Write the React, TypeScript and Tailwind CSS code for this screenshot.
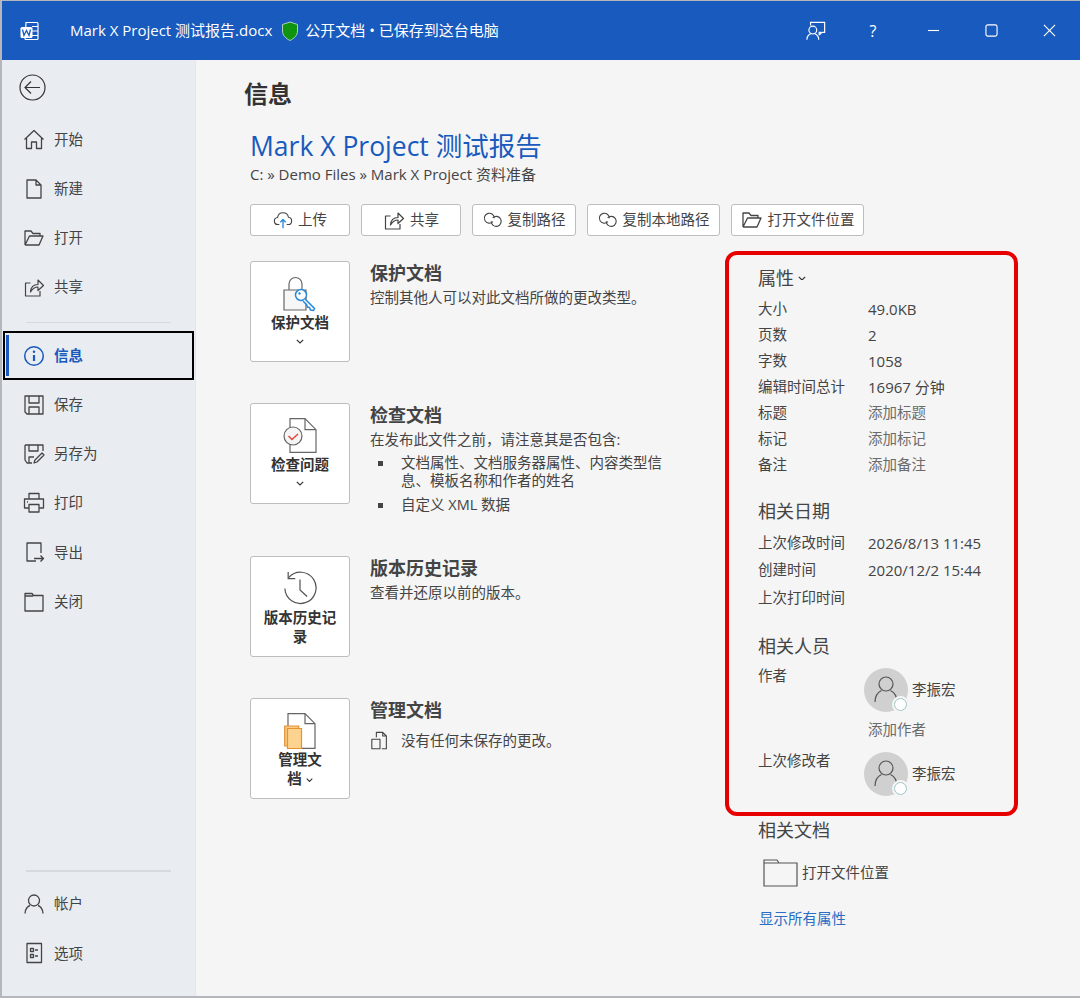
import { ReactNode } from "react"

const FONT = 'font-["Open_Sans","Noto_Sans_CJK_SC",sans-serif]'

function Ico({ size = 22, sw = 1.3, color = "#444", children }: { size?: number; sw?: number; color?: string; children: ReactNode }) {
  return (
    <svg width={size} height={size} viewBox="0 0 22 22" fill="none" stroke={color} strokeWidth={sw} strokeLinejoin="round" className="shrink-0">
      {children}
    </svg>
  )
}

const HomeIcon = () => <Ico><path d="M1.5 10.5 11 1.5l9.500 9M3.500 9v10.500h5V13h5v6.500h5V9" /></Ico>
const NewIcon = () => <Ico><path d="M4 2h9l5 5v13H4zM13 2v5h5" /></Ico>
const OpenIcon = () => <Ico><path d="M2 18V4h6l2 2.500h7V9M2 18h14l4-9H6.500L2 18" /></Ico>
const ShareIcon = () => <Ico sw={1.2}><path d="M7.500 7H2.500v13H17v-5M7.500 16c.3-4.500 3-7.500 7.500-7.500V4l5.500 5.500L15 14.500V11c-3 0-5.500 1.500-7.500 5z" /></Ico>
const InfoIcon = () => (
  <Ico color="#185abd" sw={1.5}>
    <circle cx="11" cy="11" r="9.300" />
    <path d="M11 10v6" strokeWidth={2.200} />
    <circle cx="11" cy="6.800" r="1.200" fill="#185abd" stroke="none" />
  </Ico>
)
const SaveIcon = () => <Ico><path d="M2 2h18v18H4l-2-2zM6 2v7h10V2M6 20v-7h10v7" /></Ico>
const SaveAsIcon = () => <Ico><path d="M2 2h18v6M2 2v15l2 3h5M6 2v6h9V2M6 20v-6h5M11 20l1-3 7-7 2 2-7 7z" /></Ico>
const PrintIcon = () => <Ico><path d="M6 7V1.500h10V7M6 16H1.500V7h19v9H16M6 12.500h10v7.500H6zM4 10h1" /></Ico>
const ExportIcon = () => <Ico><path d="M18 12V2H4v18h9M11 17.500h9.500M17.500 14.500l3 3-3 3" /></Ico>
const CloseIcon = () => <Ico><path d="M2 20V2.500h7l1.500 2H20V20zM2 5h8" /></Ico>
const UserIcon = () => <Ico><circle cx="11" cy="7.500" r="5.500" /><path d="M2 20.500c0-4.500 3-7.500 5-8M20 20.500c0-4.500-3-7.500-5-8" /></Ico>
const OptionsIcon = () => <Ico><path d="M4 1.500h14.500v19H4zM7.500 6.500h3v3h-3zM7.500 12.500h3v3h-3zM12 8h3M12 14h3" /></Ico>

const UploadIcon = () => (
  <Ico size={20} sw={1.2}>
    <path d="M7 16H5.500C3 16 1.500 14 1.500 12c0-2 1.500-3.500 3.500-3.700C5.500 5 8 3 11 3c3 0 5.500 2.300 6 5 2 .3 3.500 2 3.500 4s-1.500 4-4 4H15" />
    <path d="M11 20v-9M8 13.500l3-3 3 3" stroke="#2b88d8" strokeWidth={1.500} />
  </Ico>
)
const LinkIcon = () => (
  <Ico size={20} sw={1.2}>
    <path d="M10.900 12.900A5.500 5.500 0 1 1 12.500 9" />
    <path d="M10.600 8.600A5.500 5.500 0 1 1 9 12.500" />
  </Ico>
)

const LockIcon = () => (
  <svg width="34" height="37" viewBox="0 0 34 37" fill="none">
    <path d="M6 14V8a6.500 6.500 0 0 1 13 0v6" stroke="#666" strokeWidth="1.200" />
    <path d="M1 14h22v20H1z" fill="#f7f7f7" stroke="#666" strokeWidth="1.200" />
    <circle cx="18" cy="19" r="5.500" fill="#fff" stroke="#2b88d8" strokeWidth="1.500" />
    <path d="M22 23l9.500 9.500-1 2-3-.5-1-2.500-2-.5-1-2.500-3.500-3.500" fill="#fff" stroke="#2b88d8" strokeWidth="1.500" />
    <circle cx="16.500" cy="17.500" r="1.200" fill="#2b88d8" />
  </svg>
)
const InspectIcon = () => (
  <svg width="34" height="35" viewBox="0 0 34 35" fill="none">
    <path d="M7 .7h15l11 11v22.600H7z" fill="#fff" stroke="#666" strokeWidth="1.200" />
    <path d="M22 .7v11h11" stroke="#666" strokeWidth="1.200" />
    <circle cx="10" cy="18" r="9" fill="#f5f5f5" stroke="#666" strokeWidth="1.200" />
    <path d="M5.500 18l3.500 3.500 6-5.500" stroke="#e2483f" strokeWidth="1.500" />
  </svg>
)
const HistoryIcon = () => (
  <svg width="36" height="35" viewBox="0 0 38 37" fill="none" stroke="#555" strokeWidth="1.300">
    <path d="M7 7A16.500 16.500 0 1 1 3 18.500" />
    <path d="M6.500 1v7h7.500" />
    <path d="M19 9v11l7.500 7" />
  </svg>
)
const ManageIcon = () => (
  <svg width="32" height="36" viewBox="0 0 32 36" fill="none">
    <path d="M4 .7h17l10 10v24.600H4z" fill="#fff" stroke="#666" strokeWidth="1.200" />
    <path d="M21 .7v10h10" stroke="#666" strokeWidth="1.200" />
    <path d="M.7 13h14v20H.7z" fill="#f8c98a" stroke="#e8912d" strokeWidth="1.200" />
    <path d="M3.500 15.500h14v20h-14z" fill="#fcd48f" stroke="#e8912d" strokeWidth="1.200" />
  </svg>
)
const SmallDocs = () => (
  <Ico size={20} sw={1.200}>
    <path d="M7 7V1.500h7l4 4v14h-5M14 1.500v4h4" />
    <path d="M2 9h9v10.500H2z" />
  </Ico>
)

const Chevron = ({ size = 8 }: { size?: number }) => (
  <svg width={size} height={size * 0.6} viewBox="0 0 10 6" fill="none" stroke="#333" strokeWidth="1.500" className="inline-block">
    <path d="M1 1l4 4 4-4" />
  </svg>
)

function NavItem({ icon, label, active }: { icon: ReactNode; label: string; active?: boolean }) {
  if (active) {
    return (
      <div className="h-[49px] mx-[1px] flex items-center border-2 border-black pl-[1px]">
        <div className="w-[3px] h-[41px] bg-[#185abd]" />
        <div className="ml-[14px] flex items-center gap-[9px]">
          {icon}
          <span className="text-[14.500px] font-semibold text-[#185abd]">{label}</span>
        </div>
      </div>
    )
  }
  return (
    <div className="h-[49.200px] pl-[21px] flex items-center gap-[9px] text-[14.500px] text-[#444]">
      {icon}
      <span>{label}</span>
    </div>
  )
}

function ActionBtn({ icon, label, w }: { icon: ReactNode; label: string; w: string }) {
  return (
    <div className={`h-[32px] ${w} bg-white border border-[#bdbdbd] rounded-[3px] flex items-center justify-center gap-[5px] text-[14.500px] text-[#444]`}>
      {icon}
      <span>{label}</span>
    </div>
  )
}

function Section({ icon, label, chevron, title, h, children }: { icon: ReactNode; label: ReactNode; chevron?: boolean; title: string; h: string; children: ReactNode }) {
  return (
    <div className={`flex ${h} items-start`}>
      <div className="w-[100px] h-[101px] shrink-0 bg-white border border-[#bdbdbd] rounded-[3px] flex flex-col items-center pt-[14px]">
        <div className="h-[37px] flex items-start justify-center">{icon}</div>
        <div className="text-[14.500px] leading-[18.500px] font-bold text-[#333] text-center mt-[1px] px-[10px]">{label}</div>
        {chevron && <div className="mt-[2px] leading-[10px]"><Chevron /></div>}
      </div>
      <div className="ml-[20px] w-[310px]">
        <div className="text-[18px] leading-[24px] font-bold text-[#444]">{title}</div>
        {children}
      </div>
    </div>
  )
}

function PropRow({ k, v, muted, h = "h-[26px]" }: { k: string; v?: string; muted?: boolean; h?: string }) {
  return (
    <div className={`flex items-center ${h} text-[14.500px] text-[#444]`}>
      <span className="w-[110px] shrink-0">{k}</span>
      <span className={muted ? "text-[#6b6b6b]" : "text-[15px]"}>{v}</span>
    </div>
  )
}

function Person() {
  return (
    <div className="flex items-center">
      <div className="relative w-[44px] h-[44px] rounded-full bg-[#d0d0d0] flex items-center justify-center">
        <svg width="24" height="27" viewBox="0 0 24 27" fill="none" stroke="#555" strokeWidth="1.200">
          <circle cx="12" cy="8" r="7" />
          <path d="M1 26c0-6 3.500-10 6.500-11.500M23 26c0-6-3.500-10-6.500-11.500" />
        </svg>
        <div className="absolute right-[-1px] bottom-[-1px] w-[17px] h-[17px] rounded-full bg-white border-2 border-[#f5f5f5] outline outline-1 outline-[#9cc3c4] outline-offset-[-3px]" />
      </div>
      <span className="ml-[4px] text-[14.500px] text-[#444]">李振宏</span>
    </div>
  )
}

function Bullet({ children, className }: { children: ReactNode; className?: string }) {
  return (
    <li className={`flex ${className ?? ""}`}>
      <span className="w-[31px] shrink-0 pl-[8px] pt-[7px]"><span className="block w-[5px] h-[5px] bg-[#444]" /></span>
      <span className="w-[265px]">{children}</span>
    </li>
  )
}

export default function App() {
  return (
    <div className={`w-[1080px] h-[998px] flex flex-col overflow-hidden border-t border-l-2 border-b-2 border-[#b4b7bb] ${FONT}`}>
      <header className="h-[59px] shrink-0 bg-[#185abd] text-white flex items-center">
        <svg width="20" height="20" viewBox="0 0 20 20" fill="none" className="ml-[18px]">
          <path d="M6 1.500h11a1 1 0 0 1 1 1v15a1 1 0 0 1-1 1H6a1 1 0 0 1-1-1z" stroke="#fff" strokeWidth="1.200" />
          <path d="M12 5.500h6M12 10h6M12 14.500h6" stroke="#fff" strokeWidth="1.200" />
          <rect x="0.500" y="6" width="12" height="11" rx="1.500" fill="#fff" />
          <path d="M2.500 8.500l1.500 6 2.500-5 2.500 5 1.500-6" stroke="#185abd" strokeWidth="1.300" />
        </svg>
        <span className="ml-[30px] text-[15px]">Mark X Project 测试报告.docx</span>
        <svg width="18" height="20" viewBox="0 0 18 20" className="ml-[9px]">
          <path d="M9 1l7.500 2.500V10c0 4.500-3.500 7.500-7.500 9.500C5 17.500 1.500 14.500 1.500 10V3.500z" fill="#109410" stroke="#cfe6cf" strokeWidth="0.800" />
        </svg>
        <span className="ml-[6px] text-[15px]">公开文档 • 已保存到这台电脑</span>
        <div className="ml-auto flex items-center pr-[24px]">
          <svg width="20" height="20" viewBox="0 0 22 22" fill="none" stroke="#fff" strokeWidth="1.300">
            <path d="M5 5V1.500h15.500v11h-3l-3 3M14.500 15.500v-3h2" />
            <circle cx="7.500" cy="10" r="4.300" />
            <path d="M1 20.500c0-3.500 2-5.500 4-6.500M14 20.500c0-3.500-2-5.500-4-6.500" />
          </svg>
          <span className="ml-[40px] text-[16px] w-[14px] text-center">?</span>
          <svg width="13" height="13" viewBox="0 0 14 14" className="ml-[47px]" fill="none" stroke="#fff" strokeWidth="1.200"><path d="M1 7h12" /></svg>
          <svg width="13" height="13" viewBox="0 0 14 14" className="ml-[45px]" fill="none" stroke="#fff" strokeWidth="1.200"><rect x="1" y="1" width="12" height="12" rx="2" /></svg>
          <svg width="13" height="13" viewBox="0 0 14 14" className="ml-[45px]" fill="none" stroke="#fff" strokeWidth="1.200"><path d="M1 1l12 12M13 1L1 13" /></svg>
        </div>
      </header>

      <div className="flex flex-1 min-h-0">
        <aside className="w-[194px] shrink-0 bg-[#e9edf2] flex flex-col border-r border-[#e4e6e9]">
          <div className="h-[55px] pl-[17px] pt-[14px] shrink-0">
            <svg width="27" height="27" viewBox="0 0 27 27" fill="none" stroke="#333" strokeWidth="1.200">
              <circle cx="13.500" cy="13.500" r="12.500" />
              <path d="M21 13.500H6M12 7.500l-6 6 6 6" />
            </svg>
          </div>
          <NavItem icon={<HomeIcon />} label="开始" />
          <NavItem icon={<NewIcon />} label="新建" />
          <NavItem icon={<OpenIcon />} label="打开" />
          <NavItem icon={<ShareIcon />} label="共享" />
          <div className="h-[1.500px] mx-[24px] mt-[10px] mb-[8px] bg-[#d6d9dd]" />
          <NavItem icon={<InfoIcon />} label="信息" active />
          <NavItem icon={<SaveIcon />} label="保存" />
          <NavItem icon={<SaveAsIcon />} label="另存为" />
          <NavItem icon={<PrintIcon />} label="打印" />
          <NavItem icon={<ExportIcon />} label="导出" />
          <NavItem icon={<CloseIcon />} label="关闭" />
          <div className="mt-auto h-[1.500px] mx-[24px] mb-[8px] bg-[#d6d9dd]" />
          <NavItem icon={<UserIcon />} label="帐户" />
          <NavItem icon={<OptionsIcon />} label="选项" />
          <div className="h-[18px] shrink-0" />
        </aside>

        <main className="flex-1 bg-[#f5f5f5] pl-[54px] min-w-0">
          <h1 className="mt-[16px] -ml-[6px] text-[24px] leading-[36px] font-bold text-[#333]">信息</h1>
          <div className="mt-[14px] text-[26.500px] leading-[40px] text-[#185abd]">Mark X Project 测试报告</div>
          <div className="mt-[1px] text-[15px] leading-[14px] text-[#444]">C: » Demo Files » Mark X Project 资料准备</div>
          <div className="mt-[23px] flex gap-[11px]">
            <ActionBtn icon={<UploadIcon />} label="上传" w="w-[100px]" />
            <ActionBtn icon={<ShareIcon />} label="共享" w="w-[100px]" />
            <ActionBtn icon={<LinkIcon />} label="复制路径" w="w-[104px]" />
            <ActionBtn icon={<LinkIcon />} label="复制本地路径" w="w-[133px]" />
            <ActionBtn icon={<OpenIcon />} label="打开文件位置" w="w-[133px]" />
          </div>

          <div className="mt-[15px] flex">
            <div className="w-[475px] shrink-0 pt-[10px]">
              <Section icon={<LockIcon />} label="保护文档" chevron title="保护文档" h="h-[142px]">
                <p className="text-[14.500px] leading-[20px] text-[#444] mt-[3px]">控制其他人可以对此文档所做的更改类型。</p>
              </Section>
              <Section icon={<InspectIcon />} label="检查问题" chevron title="检查文档" h="h-[153px]">
                <p className="text-[14.500px] leading-[20px] text-[#444] mt-[3px]">在发布此文件之前，请注意其是否包含:</p>
                <ul className="text-[14.500px] leading-[18px] text-[#444] mt-[4px]">
                  <Bullet>文档属性、文档服务器属性、内容类型信息、模板名称和作者的姓名</Bullet>
                  <Bullet className="mt-[6px]">自定义 XML 数据</Bullet>
                </ul>
              </Section>
              <Section icon={<HistoryIcon />} label="版本历史记录" title="版本历史记录" h="h-[142px]">
                <p className="text-[14.500px] leading-[20px] text-[#444] mt-[3px]">查看并还原以前的版本。</p>
              </Section>
              <Section icon={<ManageIcon />} label={<>管理文<br />档 <Chevron size={7} /></>} title="管理文档" h="h-[142px]">
                <div className="flex items-center gap-[11px] mt-[8px] text-[14.500px] text-[#444]">
                  <SmallDocs />
                  <span>没有任何未保存的更改。</span>
                </div>
              </Section>
            </div>

            <div className="w-[293px] shrink-0">
              <div className="h-[565px] border-[4px] border-[#e60000] rounded-[12px] pl-[29px] pt-[10px]">
                <div className="text-[18px] leading-[26px] text-[#444] flex items-center gap-[4px]">属性 <Chevron /></div>
                <div className="mt-[5px]">
                  <PropRow k="大小" v="49.0KB" />
                  <PropRow k="页数" v="2" />
                  <PropRow k="字数" v="1058" />
                  <PropRow k="编辑时间总计" v="16967 分钟" />
                  <PropRow k="标题" v="添加标题" muted />
                  <PropRow k="标记" v="添加标记" muted />
                  <PropRow k="备注" v="添加备注" muted />
                </div>
                <div className="mt-[20px] text-[18px] leading-[26px] text-[#444]">相关日期</div>
                <div className="mt-[5px]">
                  <PropRow k="上次修改时间" v="2026/8/13 11:45" h="h-[27.500px]" />
                  <PropRow k="创建时间" v="2020/12/2 15:44" h="h-[27.500px]" />
                  <PropRow k="上次打印时间" h="h-[27.500px]" />
                </div>
                <div className="mt-[21px] text-[18px] leading-[26px] text-[#444]">相关人员</div>
                <div className="flex mt-[3px] text-[14.500px] text-[#444]">
                  <span className="w-[106px] shrink-0 leading-[20px] pt-[4px]">作者</span>
                  <div className="pt-[6px]">
                    <Person />
                    <div className="mt-[8px] ml-[4px] leading-[20px] text-[#6b6b6b]">添加作者</div>
                  </div>
                </div>
                <div className="flex mt-[8px] text-[14.500px] text-[#444]">
                  <span className="w-[106px] shrink-0 leading-[20px] pt-[3px]">上次修改者</span>
                  <div className="pt-[4px]"><Person /></div>
                </div>
              </div>
              <div className="pl-[33px]">
                <div className="mt-[1px] text-[18px] leading-[26px] text-[#444]">相关文档</div>
                <div className="mt-[16px] ml-[5px] flex items-center gap-[4px] text-[14.500px] text-[#444]">
                  <svg width="35" height="28" viewBox="0 0 35 28" fill="none" stroke="#555" strokeWidth="1.200">
                    <path d="M1 27V1h13l2 3h18v23zM1 4h15" />
                  </svg>
                  <span>打开文件位置</span>
                </div>
                <div className="mt-[22px] ml-[1px] text-[14.500px] leading-[20px] text-[#2b6cc4]">显示所有属性</div>
              </div>
            </div>
          </div>
        </main>
      </div>
    </div>
  )
}
